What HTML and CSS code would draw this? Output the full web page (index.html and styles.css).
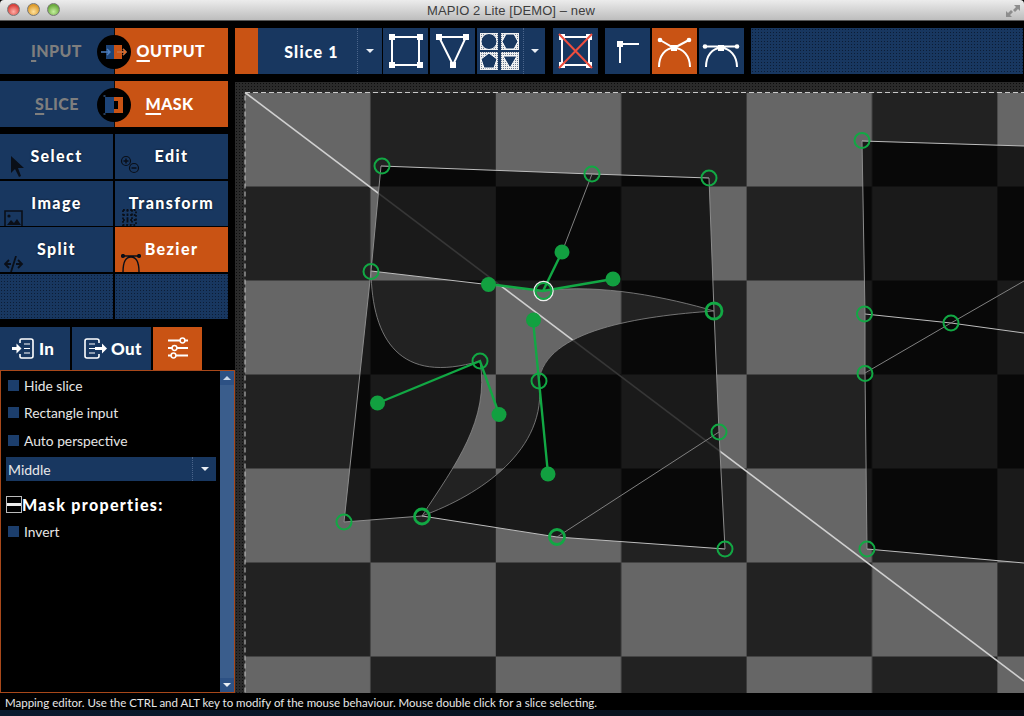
FILE: index.html
```html
<!DOCTYPE html>
<html lang="en">
<head>
<meta charset="utf-8">
<title>MAPIO 2 Lite [DEMO] – new</title>
<link rel="stylesheet" href="styles.css">
</head>
<body>
<div class="window">
  <header class="titlebar">
    <div class="lights"><i class="light red"></i><i class="light amber"></i><i class="light green"></i></div>
    <span class="title">MAPIO 2 Lite [DEMO] – new</span>
    <svg class="resize" width="16" height="16" viewBox="0 0 16 16"><path d="M9 2h6v6l-2-2-3 3-2-2 3-3zM7 14H1V8l2 2 3-3 2 2-3 3z" fill="#8d8d8d"/></svg>
  </header>
  <div class="main">
    <aside class="side">
      <div class="toggle">
        <div class="half blue off"><span class="tlabel l1"><u>I</u>NPUT</span></div>
        <div class="half orange"><span class="tlabel l2"><u>O</u>UTPUT</span></div>
        <div class="hub">
          <svg width="32" height="32" viewBox="0 0 32 32"><rect x="8" y="9" width="8" height="14" fill="#1d4478"/><rect x="16" y="9" width="8" height="14" fill="#c95314"/><path d="M3 16h9M9 13l3 3-3 3M19 16h9M25 13l3 3-3 3" fill="none" stroke="#4d7fc0" stroke-width="1.4"/><path d="M19 16h9M25 13l3 3-3 3" fill="none" stroke="#e06a20" stroke-width="1.4"/></svg>
        </div>
      </div>
      <div class="toggle">
        <div class="half blue off"><span class="tlabel l3"><u>S</u>LICE</span></div>
        <div class="half orange"><span class="tlabel l4"><u>M</u>ASK</span></div>
        <div class="hub">
          <svg width="32" height="32" viewBox="0 0 32 32"><rect x="7" y="8" width="9" height="16" fill="#1d4478"/><path d="M16 8h9v16h-9v-4h4v-8h-4z" fill="#c95314"/><path d="M5.500 7h2M5.500 25h2" stroke="#4d7fc0" stroke-width="1.200"/></svg>
        </div>
      </div>
      <div class="modes">
        <div class="mode">Select
          <svg class="micon" width="20" height="24" viewBox="0 0 20 24"><path d="M2 1v17l4-4 4 8 2-1-3-8h6z" fill="#0a0f18"/></svg>
        </div>
        <div class="mode">Edit
          <svg class="micon" width="24" height="24" viewBox="0 0 24 24" fill="none" stroke="#0a0f18" stroke-width="1.200"><circle cx="8" cy="7" r="4.500"/><path d="M5.500 7h5M8 4.500v5" stroke-width="1.500"/><circle cx="16" cy="14" r="4.500"/><path d="M13.500 14h5" stroke-width="1.500"/></svg>
        </div>
        <div class="mode">Image
          <svg class="micon" width="20" height="16" viewBox="0 0 20 16"><path d="M1 16V1h17v15" fill="none" stroke="#0a0f18" stroke-width="1.600"/><circle cx="5" cy="6" r="1.600" fill="#0a0f18"/><path d="M3 15l4-5 3 3 3-4 4 6z" fill="#0a0f18"/></svg>
        </div>
        <div class="mode">Transform
          <svg class="micon" width="18" height="18" viewBox="0 0 18 18" fill="none" stroke="#0a0f18" stroke-width="1.800" stroke-dasharray="1.800 1.800"><rect x="2" y="2" width="13" height="15"/><path d="M6.500 2v15M11 2v15M2 7h13M2 12h13"/></svg>
        </div>
        <div class="mode">Split
          <svg class="micon" width="20" height="16" viewBox="0 0 20 16" fill="none" stroke="#0a0f18" stroke-width="1.800"><path d="M12 0L7 16M5 4L1 8l4 4M14 4l4 4-4 4M1 8h6M12 8h6"/></svg>
        </div>
        <div class="mode on">Bezier
          <svg class="micon" width="20" height="18" viewBox="0 0 20 18" fill="none" stroke="#0a0f18" stroke-width="1.400"><path d="M2 18C2 7 5 3 10 3s8 4 8 15M1 2h18"/><circle cx="2" cy="2" r="1.400" fill="#0a0f18"/><circle cx="18" cy="2" r="1.400" fill="#0a0f18"/></svg>
        </div>
        <div class="mode empty"></div>
        <div class="mode empty"></div>
      </div>
      <div class="tabs">
        <div class="tab t1">
          <svg width="23" height="21" viewBox="0 0 23 21" fill="none" stroke="#fff" stroke-width="1.600"><path d="M9 5V2.500Q9 1 10.500 1H20q2 0 2 2v15q0 2-2 2h-9.500Q9 20 9 18.500V16"/><path d="M13 6h6M13 10.500h6M13 15h6" stroke-width="1.100"/><path d="M1 10.500h5" stroke-width="3"/><path d="M5.500 5.500l5 5-5 5z" fill="#fff" stroke="none"/></svg>
          <span>In</span>
        </div>
        <div class="tab t2">
          <svg width="24" height="21" viewBox="0 0 24 21" fill="none" stroke="#fff" stroke-width="1.600"><path d="M15 5V3q0-2-2-2H3Q1 1 1 3v15q0 2 2 2h10q2 0 2-2v-2"/><path d="M5 6h6M5 10.500h6M5 15h6" stroke-width="1.100"/><path d="M11 10.500h8" stroke-width="3"/><path d="M18 5.500l5 5-5 5z" fill="#fff" stroke="none"/></svg>
          <span>Out</span>
        </div>
        <div class="tab t3">
          <svg width="22" height="22" viewBox="0 0 22 22" fill="none" stroke="#fff" stroke-width="2"><path d="M1 3.500h12M18 3.500h3M1 11h4M10 11h11M1 18.500h3M9 18.500h12"/><circle cx="15.500" cy="3.500" r="2.400" stroke-width="1.500"/><circle cx="7.500" cy="11" r="2.400" stroke-width="1.500"/><circle cx="6.500" cy="18.500" r="2.400" stroke-width="1.500"/></svg>
        </div>
      </div>
      <section class="panel">
        <div class="props">
          <label class="check first"><i class="box"></i>Hide slice</label>
          <label class="check"><i class="box"></i>Rectangle input</label>
          <label class="check"><i class="box"></i>Auto perspective</label>
          <div class="select"><span class="sel-text">Middle</span><span class="sel-btn"><i class="caret"></i></span></div>
          <h3 class="group"><i class="collapse"></i>Mask properties:</h3>
          <label class="check inv"><i class="box"></i>Invert</label>
        </div>
        <div class="scroll">
          <span class="sbtn"><i class="caret up"></i></span>
          <span class="strack"></span>
          <span class="sbtn"><i class="caret"></i></span>
        </div>
      </section>
    </aside>
    <div class="content">
      <nav class="toolbar">
        <div class="swatch"></div>
        <div class="combo"><span class="combo-text">Slice 1</span><span class="combo-btn"><i class="caret"></i></span></div>
        <button class="tool g1">
          <svg width="45" height="46" viewBox="0 0 45 46" fill="none" stroke="#fff" stroke-width="2"><rect x="9" y="9" width="27" height="28"/><g fill="#fff" stroke="none"><rect x="6" y="6" width="6" height="6"/><rect x="34" y="6" width="6" height="6"/><rect x="6" y="34" width="6" height="6"/><rect x="34" y="34" width="6" height="6"/></g></svg>
        </button>
        <button class="tool">
          <svg width="45" height="46" viewBox="0 0 45 46" fill="none" stroke="#fff" stroke-width="2"><path d="M9 9h27L23 37z"/><g fill="#fff" stroke="none"><rect x="6" y="6" width="6" height="6"/><rect x="33" y="6" width="6" height="6"/><rect x="20" y="34" width="6" height="6"/></g></svg>
        </button>
        <button class="tool shapes">
          <svg width="46" height="46" viewBox="0 0 46 46"><defs><pattern id="dotted" width="2" height="2" patternUnits="userSpaceOnUse"><rect width="2" height="2" fill="#f0f0f0"/><rect width="1" height="1" fill="#6f7d92"/></pattern></defs><g fill="url(#dotted)"><rect x="3" y="5" width="18" height="17"/><rect x="24" y="5" width="18" height="17"/><rect x="3" y="24" width="18" height="18"/><rect x="24" y="24" width="18" height="18"/></g><g fill="#183760" stroke="#fff" stroke-width="1"><circle cx="12" cy="13.500" r="8"/><path d="M29 6h8l4 7.500-4 7.500h-8l-4-7.500z"/><path d="M12 25l8 6-3 9H7l-3-9z"/><path d="M26 28h14l-7 12z"/></g></svg>
          <i class="sep"></i><i class="caret"></i>
        </button>
        <button class="tool g2">
          <svg width="45" height="46" viewBox="0 0 45 46" fill="none"><rect x="9" y="9" width="27" height="28" stroke="#fff" stroke-width="2"/><g fill="#fff"><rect x="6" y="6" width="6" height="6"/><rect x="33" y="6" width="6" height="6"/><rect x="6" y="34" width="6" height="6"/><rect x="33" y="34" width="6" height="6"/></g><path d="M6 6l33 34M39 6L6 40" stroke="#ee4e3e" stroke-width="2"/></svg>
        </button>
        <button class="tool g3">
          <svg width="45" height="46" viewBox="0 0 45 46" fill="none" stroke="#fff" stroke-width="2"><path d="M15 16v19M18 16h16"/><rect x="12" y="13" width="6" height="6" fill="#fff" stroke="none"/></svg>
        </button>
        <button class="tool on">
          <svg width="45" height="46" viewBox="0 0 45 46" fill="none" stroke="#fff" stroke-width="2"><path d="M8 12l14 8 15-8M7 39C7 28 13 20 22 20s16 8 16 19"/><rect x="19" y="17" width="6" height="6" fill="#fff" stroke="none"/><circle cx="8" cy="12" r="2.300" fill="#fff" stroke="none"/><circle cx="37" cy="12" r="2.300" fill="#fff" stroke="none"/></svg>
        </button>
        <button class="tool">
          <svg width="45" height="46" viewBox="0 0 45 46" fill="none" stroke="#fff" stroke-width="2"><path d="M6 18.500h32M7 39C7 28 13 20 22 20s16 8 16 19"/><rect x="19" y="17" width="6" height="6" fill="#fff" stroke="none"/><circle cx="6" cy="18.500" r="2.300" fill="#fff" stroke="none"/><circle cx="38" cy="18.500" r="2.300" fill="#fff" stroke="none"/></svg>
        </button>
        <div class="filler"></div>
      </nav>
      <div class="stage">
        <svg class="canvas" width="789" height="611" viewBox="235 82 789 611">
          <defs>
            <pattern id="chk" x="245" y="92.500" width="250.800" height="188" patternUnits="userSpaceOnUse">
              <rect width="250.800" height="188" fill="#222"/>
              <rect width="125.400" height="94" fill="#666"/>
              <rect x="125.400" y="94" width="125.400" height="94" fill="#666"/>
            </pattern>
          </defs>
          <rect x="245" y="92.500" width="779" height="601" fill="url(#chk)"/>
          <line x1="245" y1="92.500" x2="1024" y2="681" stroke="#d0d0d0" stroke-width="1.600"/>
          <rect x="245" y="92.500" width="790" height="610" fill="none" stroke="#c8c8c8" stroke-dasharray="5 3"/>
          <path class="shade" fill-rule="evenodd" d="M381 166L592 174L709 178L714 311L719 432L725 549L557 537L422 516L344 522L371 271Z M371 271L543 291C600 283 670 298 714 311C640 316 545 330 539 381C548 450 480 495 422 516C455 465 490 420 480 361C400 385 372 340 371 271Z"/>
          <path class="shade" d="M862 141L1024 146V563L867 549L865 373L865 314Z"/>
          <path class="seam" d="M543 291C600 283 670 298 714 311C640 316 545 330 539 381C548 450 480 495 422 516C455 465 490 420 480 361C400 385 372 340 371 271"/>
          <path class="edge" d="M381 166L592 174L709 178M371 271L543 291M422 516L557 537L725 549M865 314L951 323L1024 333M862 141L1024 146M867 549L1024 563"/>
          <path class="edge dim" d="M381 166L371 271L344 522L422 516M709 178L714 311L719 432L725 549M862 141L865 314L865 373L867 549"/>
          <path class="handle-thin" d="M592 174L562 252M557 537L719 432M865 373L951 323L1024 281"/>
          <path class="handle" d="M488 284L543 291L613 279M543 291L562 252M533 320L539 381L548 474M378 403L480 361L499 414"/>
          <g class="dots">
            <circle cx="488.500" cy="284.500" r="7.500"/><circle cx="613" cy="279" r="7.500"/><circle cx="562" cy="252" r="7.500"/>
            <circle cx="533.500" cy="320" r="7.500"/><circle cx="548" cy="474" r="7.500"/><circle cx="377.500" cy="403" r="7.500"/><circle cx="499" cy="414.500" r="7.500"/>
          </g>
          <circle class="selected" cx="543.500" cy="291" r="9.500"/>
          <g class="rings">
            <circle cx="382" cy="166" r="7.500"/><circle cx="592" cy="174" r="7.500"/><circle cx="709" cy="178" r="7.500"/>
            <circle cx="371" cy="271.500" r="7.500"/><circle cx="543.500" cy="291" r="8"/><circle cx="714" cy="311" r="8" class="thick"/>
            <circle cx="480" cy="361" r="7.500"/><circle cx="539" cy="381" r="7.500"/><circle cx="719" cy="432" r="7.500"/>
            <circle cx="344" cy="522" r="7.500"/><circle cx="422" cy="516.500" r="7.500" class="thick"/><circle cx="557" cy="537" r="7.500" class="thick"/><circle cx="725" cy="549" r="7.500"/>
            <circle cx="862" cy="140.500" r="7.500"/><circle cx="864.500" cy="314" r="7.500"/><circle cx="951" cy="323" r="7.500"/><circle cx="865" cy="373.500" r="7.500"/><circle cx="867" cy="549" r="7.500"/>
          </g>
        </svg>
      </div>
    </div>
  </div>
  <footer class="status">Mapping editor. Use the CTRL and ALT key to modify of the mouse behaviour. Mouse double click for a slice selecting.</footer>
  <div class="peek"></div>
</div>
</body>
</html>
```
FILE: styles.css
```css
* { box-sizing: border-box; }
html, body { margin: 0; height: 100%; background: #000; overflow: hidden; }
body { font-family: "Lato", "Open Sans", "Liberation Sans", sans-serif; color: #fff; }
.window { width: 1024px; height: 716px; display: flex; flex-direction: column; background: #000; }

.titlebar { height: 21px; flex: none; display: flex; align-items: center; justify-content: center; background: linear-gradient(#ececec, #bdbdbd); border-bottom: 1px solid #555; border-radius: 4px 4px 0 0; position: relative; }
.lights { position: absolute; left: 7px; top: 3px; display: flex; gap: 7px; }
.light { width: 13px; height: 13px; border-radius: 50%; border: 1px solid #777; }
.red { background: radial-gradient(circle at 50% 70%, #ffb0a8, #d9403a 70%); }
.amber { background: radial-gradient(circle at 50% 70%, #ffe3a0, #dc9a2a 70%); }
.green { background: radial-gradient(circle at 50% 70%, #c6f0a0, #6aaa3c 70%); }
.title { font-family: "Liberation Sans", sans-serif; font-size: 13px; letter-spacing: .1px; color: #3d3d3d; margin-left: -2px; }
.resize { position: absolute; right: 3px; top: 3px; }

.main { flex: 1; min-height: 0; display: flex; padding-top: 7px; }
.side { width: 235px; flex: none; display: flex; flex-direction: column; }

.toggle { width: 228px; height: 46px; display: flex; position: relative; margin-bottom: 7px; }
.half { flex: 1; display: flex; align-items: center; padding-bottom: 2px; font-weight: 900; font-size: 16px; letter-spacing: .4px; }
.half.blue { background: #183760; color: #7e7e7e; }
.half.orange { background: #c95314; color: #fff; border-left: 1px solid #0b0b0b; }
.tlabel u { text-underline-offset: 3px; text-decoration-thickness: 2px; }
.l1 { margin-left: 31px; }
.l2 { margin-left: 22px; }
.l3 { margin-left: 35px; }
.l4 { margin-left: 31px; }
.orange u { text-decoration-color: #fff; }
.hub { position: absolute; left: 97px; top: 7px; width: 34px; height: 34px; border-radius: 50%; background: #000; display: flex; align-items: center; justify-content: center; }

.modes { width: 228px; display: grid; grid-template-columns: 113px 113px; grid-template-rows: 45px 45px 45px 45px; gap: 1.500px 2px; margin-bottom: 8px; }
.mode { background: #183760; position: relative; text-align: center; font-weight: 900; font-size: 16px; letter-spacing: 1.400px; padding-top: 12px; text-shadow: 0 0 2px #08101e; }
.mode.on { background: #c95314; text-shadow: none; }
.mode.empty { background-color: #183760; background-image: radial-gradient(#0c1d36 .8px, transparent 1px); background-size: 3px 3px; }
.micon { position: absolute; left: 4px; bottom: 0; }
.mode:nth-child(2) .micon { left: 3px; bottom: 1px; }
.mode:nth-child(4) .micon { left: 6px; }
.mode:nth-child(1) .micon { left: 9px; }
.mode:nth-child(6) .micon { left: 6px; }

.tabs { display: flex; height: 43px; gap: 2px; }
.tab { background: #183760; display: flex; align-items: center; gap: 5px; font-weight: 900; font-size: 17px; letter-spacing: .3px; }
.tab.t1 { width: 70px; padding-left: 11px; }
.tab.t2 { width: 79px; padding-left: 12px; gap: 3px; }
.tab.t3 { width: 49px; background: #c95314; justify-content: center; }

.panel { width: 235px; height: 323px; border: 1px solid #a8481a; display: flex; background: #000; }
.props { flex: 1; display: flex; flex-direction: column; padding: 1px 4px 0 5px; }
.check { display: flex; align-items: center; gap: 5px; height: 27.500px; font-size: 13.800px; color: #e6e6e6; }
.box { width: 11px; height: 11px; background: #1c3e6c; margin-left: 2px; }
.select { height: 24px; margin-top: 3px; background: #183760; display: flex; align-items: center; font-size: 14px; color: #e8e8e8; }
.sel-text { flex: 1; padding-left: 2px; }
.sel-btn { width: 24px; height: 100%; border-left: 1px dotted #4a648a; display: flex; align-items: center; justify-content: center; }
.caret { display: inline-block; width: 0; height: 0; border-left: 4px solid transparent; border-right: 4px solid transparent; border-top: 4px solid #e8edf4; }
.caret.up { border-top: 0; border-bottom: 4px solid #c9d6e8; }
.group { margin: 14px 0 5px; display: flex; align-items: center; font-size: 16px; font-weight: 900; letter-spacing: 1.300px; height: 18px; }
.collapse { width: 16px; height: 17px; border: 1px solid #bbb; margin-right: 0; background: linear-gradient(#000 6px, #eee 6px, #eee 9px, #000 9px); }
.scroll { width: 14px; display: flex; flex-direction: column; background: #3a5d8c; }
.sbtn { height: 14px; background: #2d5184; display: flex; align-items: center; justify-content: center; }
.strack { flex: 1; }

.content { flex: 1; min-width: 0; display: flex; flex-direction: column; }
.toolbar { height: 46px; display: flex; flex: none; }
.swatch { width: 23px; background: #c95314; }
.combo { width: 124px; background: #183760; display: flex; align-items: center; font-weight: 900; font-size: 16px; letter-spacing: 1.200px; }
.combo-text { flex: 1; text-align: center; padding-left: 8px; }
.combo-btn { width: 25px; height: 100%; border-left: 1px dotted #4a648a; display: flex; align-items: center; justify-content: center; }
.tool { width: 45px; height: 46px; padding: 0; margin-left: 2px; border: 0; background: #183760; display: flex; align-items: center; justify-content: center; }
.tool.g1 { margin-left: 1px; }
.tool.g2 { margin-left: 8px; }
.tool.g3 { margin-left: 7px; }
.tool.on { background: #c95314; }
.tool.shapes { width: 68px; justify-content: flex-start; }
.tool.shapes .sep { width: 0; height: 46px; border-left: 1px dotted #4a648a; }
.tool.shapes .caret { margin-left: 7px; }
.filler { flex: 1; margin-left: 7px; margin-right: 1px; background-color: #183760; background-image: radial-gradient(#0c1d36 .8px, transparent 1px); background-size: 3px 3px; }

.stage { margin-top: 8px; flex: 1; min-height: 0; background-color: #2a2a2a; background-image: radial-gradient(#0d0d0d .8px, transparent 1px); background-size: 3px 3px; overflow: hidden; }
.canvas { display: block; }
.shade { fill: #000; fill-opacity: .74; }
.seam { fill: none; stroke: #8a8a8a; stroke-width: .8; }
.edge { fill: none; stroke: #bdbdbd; stroke-width: 1; }
.edge.dim { stroke: #8c8c8c; }
.handle-thin { fill: none; stroke: #808080; stroke-width: 1; }
.handle { fill: none; stroke: #12a844; stroke-width: 2.400; }
.dots { fill: #12a040; }
.selected { fill: none; stroke: #eee; stroke-width: 1.500; }
.rings { fill: none; stroke: #12a844; stroke-width: 2; }
.rings .thick { stroke-width: 2.800; }

.status { height: 17px; flex: none; padding: 2px 0 0 5px; font-size: 11.500px; line-height: 15px; color: #e8e8e8; background: #000; }
.peek { height: 6px; flex: none; background: linear-gradient(90deg, #0a1a2e, #08121e 60%, #060b12); }
```
